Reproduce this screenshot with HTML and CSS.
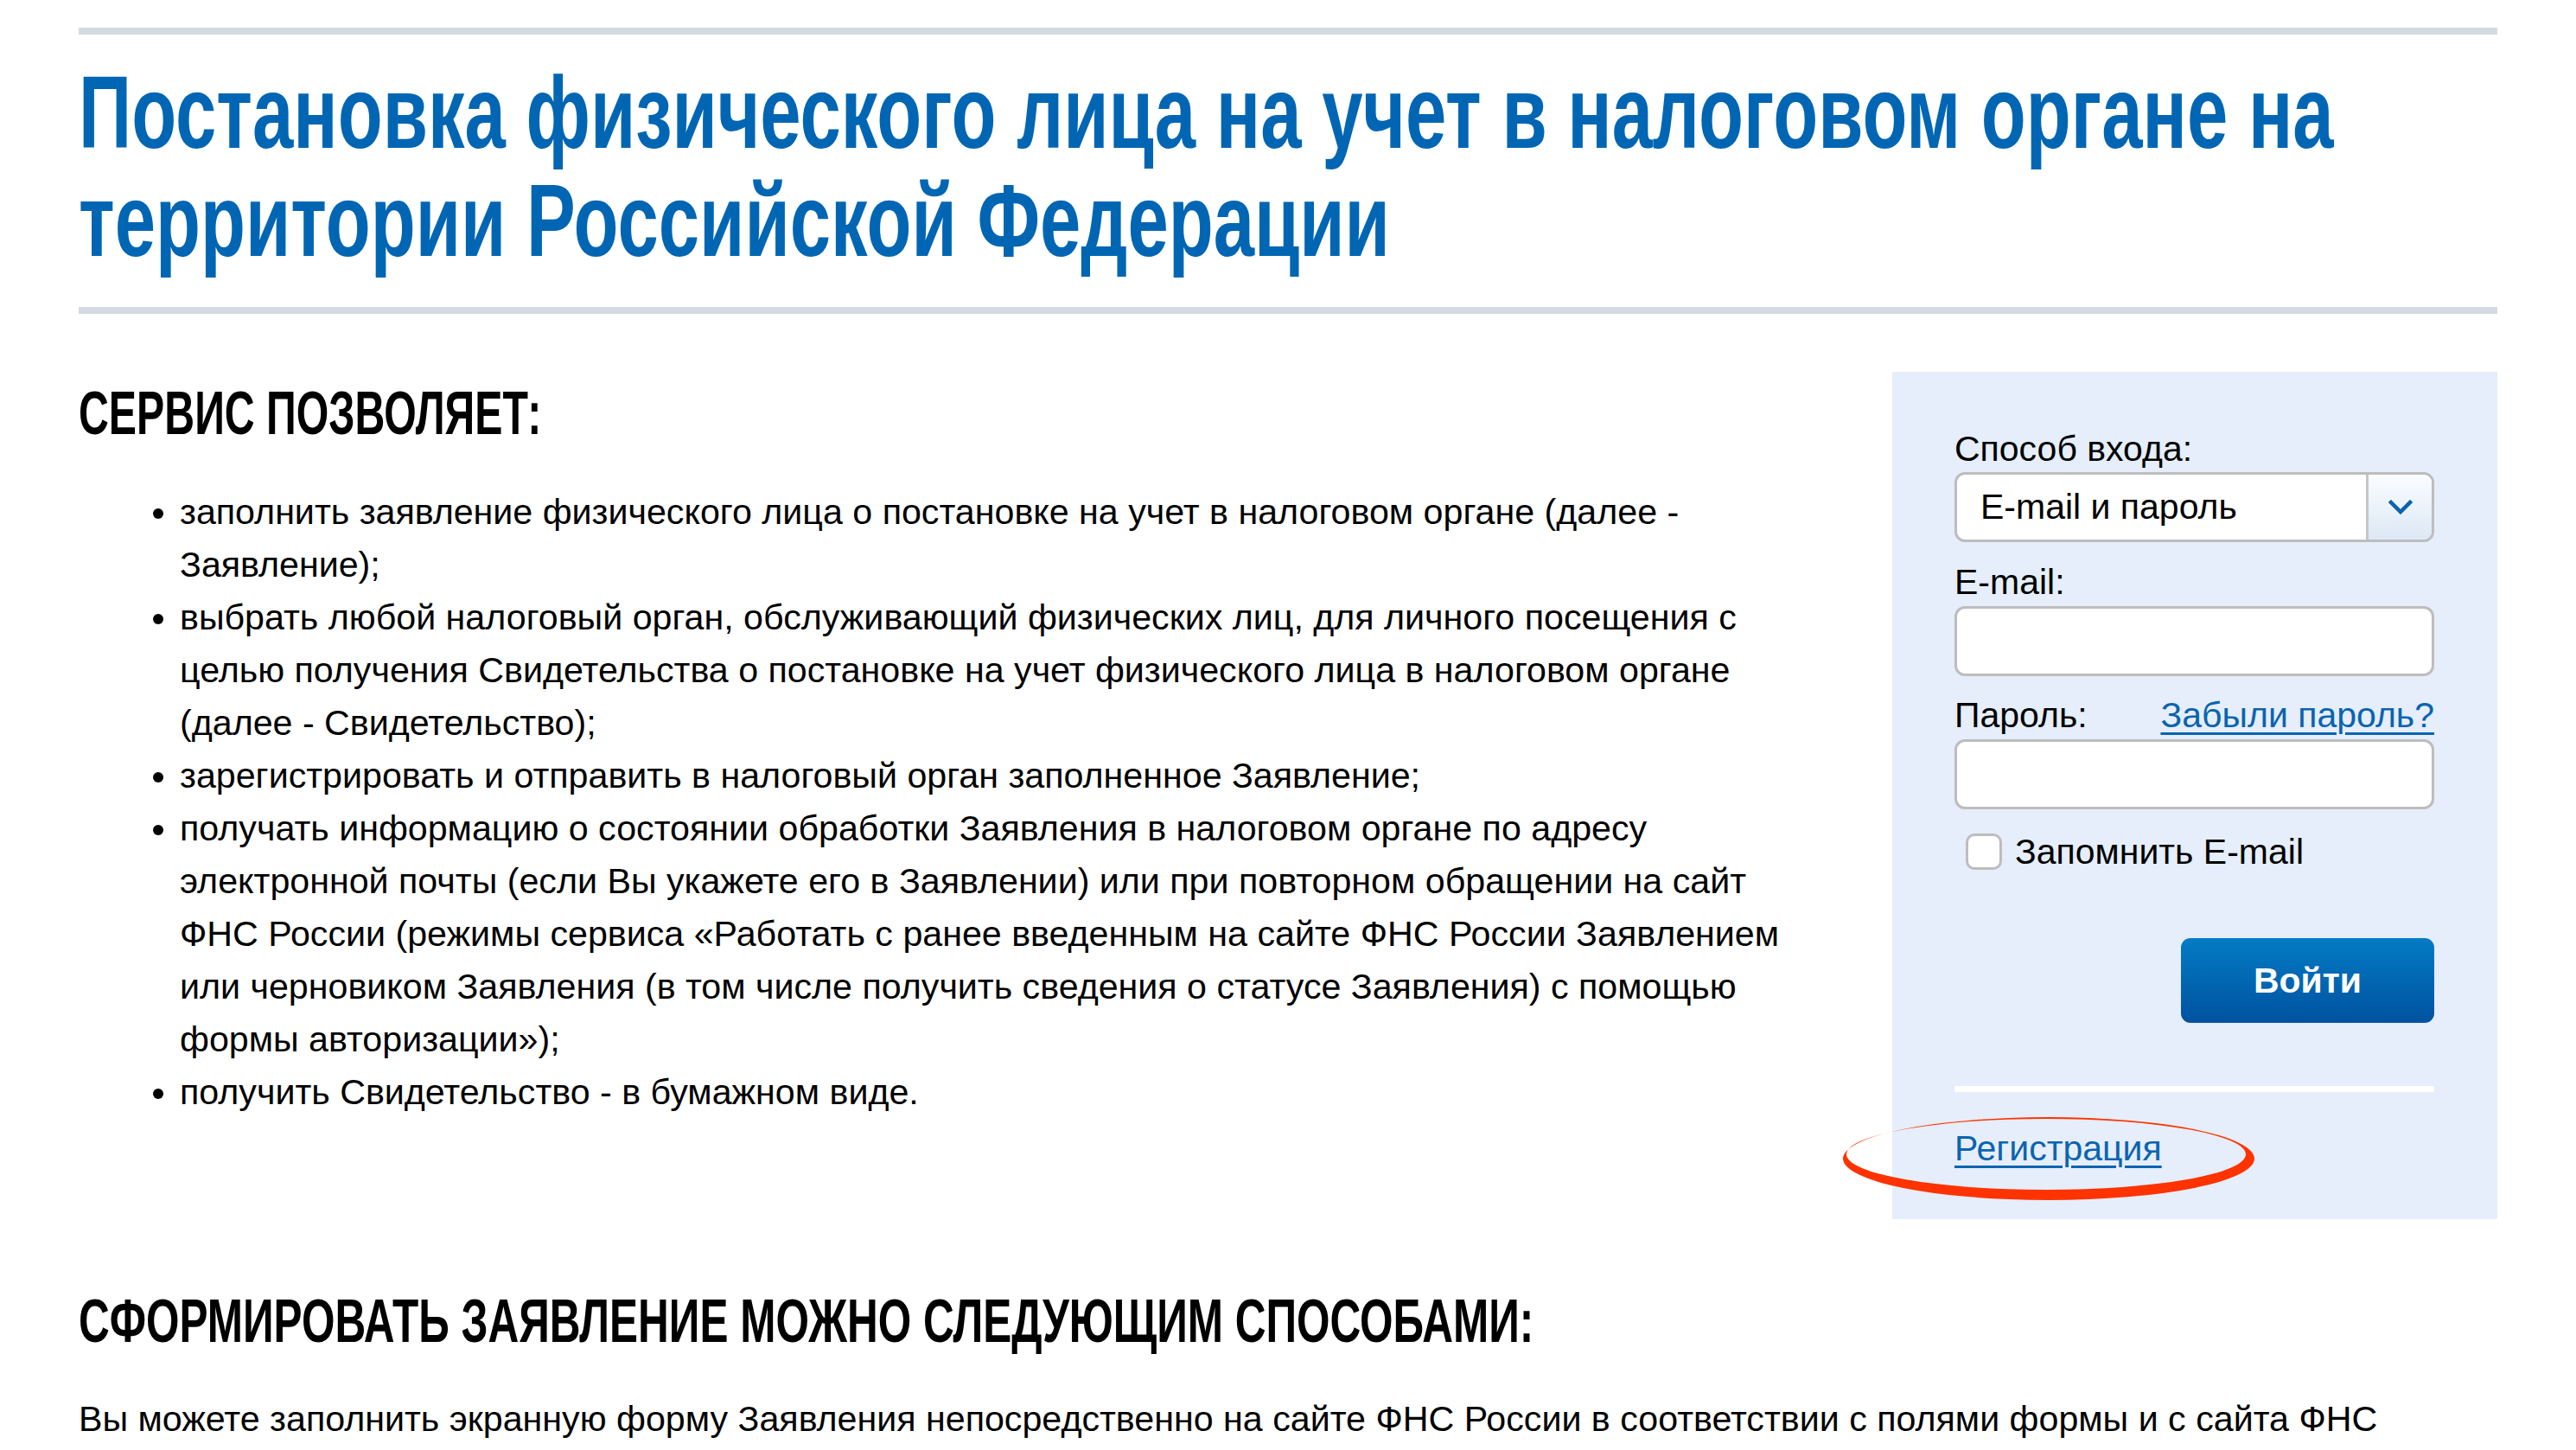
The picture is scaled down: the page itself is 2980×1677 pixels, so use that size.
FILE: index.html
```html
<!DOCTYPE html>
<html lang="ru">
<head>
<meta charset="utf-8">
<title>Постановка физического лица на учет</title>
<link rel="stylesheet" href="styles.css">
</head>
<body>
<div class="page">
  <div class="rule rule-top"></div>
  <h1 class="title">
    <span class="title-line">Постановка физического лица на учет в налоговом органе на</span>
    <span class="title-line">территории Российской Федерации</span>
  </h1>
  <div class="rule"></div>

  <div class="content">
    <div class="main">
      <h2 class="section-heading first"><span class="cond">СЕРВИС ПОЗВОЛЯЕТ:</span></h2>
      <ul class="features">
        <li>заполнить заявление физического лица о постановке на учет в налоговом органе (далее -<br>Заявление);</li>
        <li>выбрать любой налоговый орган, обслуживающий физических лиц, для личного посещения с<br>целью получения Свидетельства о постановке на учет физического лица в налоговом органе<br>(далее - Свидетельство);</li>
        <li>зарегистрировать и отправить в налоговый орган заполненное Заявление;</li>
        <li>получать информацию о состоянии обработки Заявления в налоговом органе по адресу<br>электронной почты (если Вы укажете его в Заявлении) или при повторном обращении на сайт<br>ФНС России (режимы сервиса «Работать с ранее введенным на сайте ФНС России Заявлением<br>или черновиком Заявления (в том числе получить сведения о статусе Заявления) с помощью<br>формы авторизации»);</li>
        <li>получить Свидетельство - в бумажном виде.</li>
      </ul>
    </div>

    <aside class="login">
      <div class="label">Способ входа:</div>
      <div class="select">
        <span class="select-value">E-mail и пароль</span>
        <span class="select-btn">
          <svg class="chevron" width="28" height="17" viewBox="0 0 28 17"><path d="M3 3 L14 14 L25 3" fill="none" stroke="#0b63ad" stroke-width="4.5" stroke-linecap="square"/></svg>
        </span>
      </div>
      <div class="label gap">E-mail:</div>
      <input class="field" type="text">
      <div class="label gap label-row">
        <span>Пароль:</span>
        <a class="link" href="#">Забыли пароль?</a>
      </div>
      <input class="field" type="password">
      <label class="remember">
        <span class="checkbox"></span>
        <span>Запомнить E-mail</span>
      </label>
      <button class="btn-login" type="button">Войти</button>
      <div class="divider"></div>
      <div class="register">
        <a class="link" href="#">Регистрация</a>
        <svg class="circle-mark" width="480" height="104" viewBox="0 0 480 104"><path fill="#ff3300" fill-rule="evenodd" d="M2 54 A238 48 0 1 0 478 54 A238 48 0 1 0 2 54 Z M6 49 A231 41 0 1 0 468 49 A231 41 0 1 0 6 49 Z"/></svg>
      </div>
    </aside>
  </div>

  <h2 class="section-heading second"><span class="cond">СФОРМИРОВАТЬ ЗАЯВЛЕНИЕ МОЖНО СЛЕДУЮЩИМ СПОСОБАМИ:</span></h2>
  <p class="lead">Вы можете заполнить экранную форму Заявления непосредственно на сайте ФНС России в соответствии с полями формы и с сайта ФНС</p>
</div>
</body>
</html>
```

FILE: styles.css
```css
* { box-sizing: border-box; }
html, body { margin: 0; background: #fff; }
body {
  font-family: "Liberation Sans", Arial, sans-serif;
  color: #000;
  overflow: hidden;
}
.page { padding: 0 91px; }

.rule { height: 8px; background: #d3dae2; }
.rule-top { margin-top: 32px; }

.title {
  margin: 27px 0 38px;
  font-family: "Liberation Sans", Arial, sans-serif;
  font-weight: 700;
  font-size: 119px;
  line-height: 125px;
  color: #0066b3;
}
.title-line {
  display: block;
  width: max-content;
  white-space: nowrap;
  transform: scaleX(0.715);
  transform-origin: left center;
}

.content {
  display: flex;
  justify-content: space-between;
  align-items: flex-start;
  margin-top: 67px;
}
.main { flex: 1; min-width: 0; }

.section-heading {
  margin: 0;
  font-family: "Liberation Sans", Arial, sans-serif;
  font-weight: 700;
  font-size: 71px;
  line-height: 80px;
  color: #000;
  white-space: nowrap;
}
.section-heading .cond {
  display: inline-block;
  transform-origin: left center;
}
.section-heading.first { margin-top: 8px; }
.section-heading.first .cond { transform: scaleX(0.68); }
.section-heading.second { margin-top: 78px; }
.section-heading.second .cond { transform: scaleX(0.697); }

.features {
  margin: 44px 0 0;
  padding-left: 117px;
  font-size: 41.2px;
  line-height: 61px;
  white-space: nowrap;
}

.lead {
  margin: 43px 0 0;
  font-size: 41.2px;
  line-height: 61px;
  white-space: nowrap;
}

.login {
  width: 700px;
  flex: none;
  background: #e5eefa;
  padding: 66px 73px 59px 72px;
  display: flex;
  flex-direction: column;
  font-size: 41px;
}
.label { line-height: 46px; }
.label.gap { margin-top: 23px; }
.label-row { display: flex; justify-content: space-between; margin-top: 22px !important; }

.link {
  color: #0b64b0;
  text-decoration: underline;
  text-decoration-thickness: 3px;
  text-underline-offset: 6px;
}

.select {
  margin-top: 4px;
  height: 81px;
  border: 3px solid #bdbdbd;
  border-radius: 12px;
  background: #fff;
  display: flex;
  overflow: hidden;
}
.select-value {
  flex: 1;
  padding-left: 27px;
  line-height: 75px;
}
.select-btn {
  width: 76px;
  border-left: 3px solid #c6c6c6;
  background: linear-gradient(#fbfdff, #dce8f5);
  display: flex;
  align-items: center;
  justify-content: center;
}

.field {
  display: block;
  width: 100%;
  height: 81px;
  margin-top: 5px;
  border: 3px solid #bdbdbd;
  border-radius: 12px;
  background: #fff;
  font: inherit;
  padding: 0 20px;
  outline: none;
}

.remember {
  margin-top: 26px;
  display: flex;
  align-items: center;
  line-height: 46px;
}
.checkbox {
  width: 42px;
  height: 42px;
  margin-left: 13px;
  margin-right: 15px;
  border: 3px solid #bdbdbd;
  border-radius: 10px;
  background: #fff;
}

.btn-login {
  align-self: flex-end;
  margin-top: 77px;
  width: 293px;
  height: 98px;
  border: 0;
  border-radius: 11px;
  background: linear-gradient(#037bc4, #0052a0);
  color: #fff;
  font-family: "Liberation Sans", Arial, sans-serif;
  font-weight: 700;
  font-size: 41px;
}

.divider {
  margin-top: 73px;
  height: 7px;
  background: #fff;
}

.register {
  position: relative;
  margin-top: 42px;
  line-height: 46px;
}
.circle-mark {
  position: absolute;
  left: -131px;
  top: -19px;
  pointer-events: none;
}
```
